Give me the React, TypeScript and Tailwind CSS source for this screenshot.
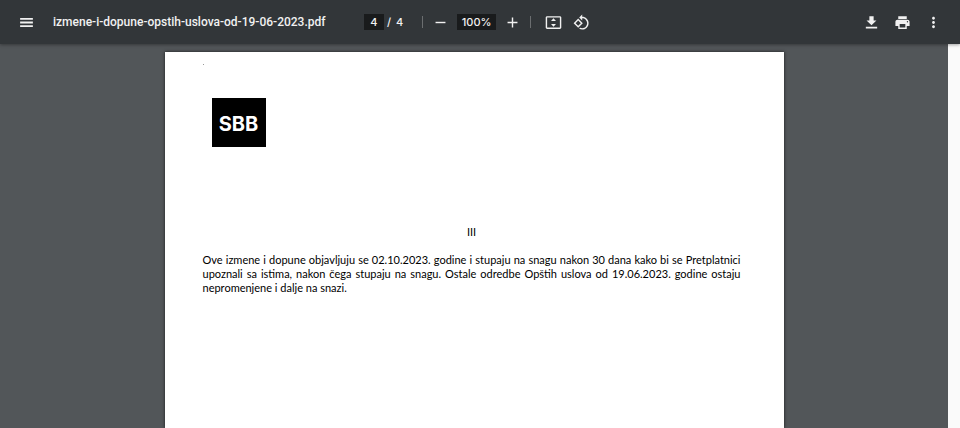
import type { ReactNode } from "react";

function Icon({ children }: { children: ReactNode }) {
  return (
    <svg viewBox="0 0 24 24" className="size-[17px]" fill="currentColor" aria-hidden="true">
      {children}
    </svg>
  );
}

function IconButton({ label, children }: { label: string; children: ReactNode }) {
  return (
    <button type="button" aria-label={label} className="flex size-[17px] shrink-0 items-center justify-center">
      <Icon>{children}</Icon>
    </button>
  );
}

function Divider() {
  return <span className="h-3 w-px shrink-0 bg-[#6b6e70]" />;
}

function Toolbar() {
  return (
    <header className="relative grid h-11 grid-cols-[1fr_auto_1fr] items-center bg-[#323639] font-['Inter',sans-serif] text-[11px] font-medium text-[#f1f1f1] shadow-[0_1px_3px_rgba(0,0,0,0.35)]">
      <div className="flex min-w-0 items-center gap-[18px] pl-[18px]">
        <IconButton label="Menu">
          <path d="M3 18.500h18v-2.500H3v2.500zm0-5.250h18v-2.500H3v2.500zm0-7.750v2.500h18V5.500H3z" />
        </IconButton>
        <h1 className="font-['Roboto',sans-serif] text-xs whitespace-nowrap">izmene-i-dopune-opstih-uslova-od-19-06-2023.pdf</h1>
      </div>
      <div className="flex items-center pr-1.5">
        <input aria-label="Page number" defaultValue="4" className="h-4 w-5 bg-[#191b1c] text-center" />
        <span className="w-3 pl-[3px]">/</span>
        <span className="mr-[19px]">4</span>
        <Divider />
        <div className="flex items-center gap-2 px-[9px]">
          <IconButton label="Zoom out">
            <path d="M5 11h14v2H5z" />
          </IconButton>
          <input aria-label="Zoom level" defaultValue="100%" className="h-4 w-[39px] bg-[#191b1c] text-center" />
          <IconButton label="Zoom in">
            <path d="M19 13h-6v6h-2v-6H5v-2h6V5h2v6h6v2z" />
          </IconButton>
        </div>
        <Divider />
        <div className="flex items-center gap-[11px] pl-[14px]">
          <IconButton label="Fit to page">
            <path d="M21 3H3c-1.1 0-2 .9-2 2v14c0 1.1.9 2 2 2h18c1.1 0 2-.9 2-2V5c0-1.1-.9-2-2-2zm0 16H3V5h18v14z" />
            <path d="M12 6l3.500 4h-7zM12 18l3.500-4h-7z" />
          </IconButton>
          <IconButton label="Rotate counterclockwise">
            <path d="M7.34 6.41L.86 12.9l6.49 6.48 6.49-6.48-6.5-6.49zM3.69 12.9l3.66-3.66L11 12.9l-3.66 3.66-3.65-3.66zm15.67-6.26C17.61 4.88 15.3 4 13 4V.76L8.76 5 13 9.24V6c1.79 0 3.58.68 4.95 2.05 2.73 2.73 2.73 7.17 0 9.9C16.58 19.32 14.79 20 13 20c-.97 0-1.94-.21-2.84-.61l-1.490 1.490C10.020 21.620 11.510 22 13 22c2.300 0 4.610-.88 6.360-2.640 3.520-3.510 3.520-9.210 0-12.720z" />
          </IconButton>
        </div>
      </div>
      <div className="flex items-center justify-end gap-[14px] pr-[18px]">
        <IconButton label="Download">
          <path d="M19 9h-4V3H9v6H5l7 7 7-7zM4 18v2.500h16V18H4z" />
        </IconButton>
        <IconButton label="Print">
          <path d="M19 8H5c-1.660 0-3 1.340-3 3v6h4v4h12v-4h4v-6c0-1.660-1.340-3-3-3zm-3 11H8v-5h8v5zm3-7c-.55 0-1-.45-1-1s.45-1 1-1 1 .45 1 1-.45 1-1 1zm-1-9H6v4h12V3z" />
        </IconButton>
        <IconButton label="More actions">
          <path d="M12 8c1.100 0 2-.9 2-2s-.9-2-2-2-2 .9-2 2 .9 2 2 2zm0 2c-1.100 0-2 .9-2 2s.9 2 2 2 2-.9 2-2-.9-2-2-2zm0 6c-1.100 0-2 .9-2 2s.9 2 2 2 2-.9 2-2-.9-2-2-2z" />
        </IconButton>
      </div>
    </header>
  );
}

export default function App() {
  return (
    <div className="flex h-screen flex-col overflow-hidden bg-[#525659]">
      <Toolbar />
      <div className="flex min-h-0 flex-1">
        <main className="flex min-w-0 flex-1 justify-center overflow-hidden pt-2">
          <article className="min-h-full w-[619px] shrink-0 bg-white pr-[43px] pl-[38px] font-['Lato','Noto_Sans',sans-serif] text-[11px] leading-[14px] text-black shadow-[0_0_3px_rgba(0,0,0,0.7)]">
            <div className="flex h-[46px] items-start pt-3">
              <span className="size-px bg-[#999999]" />
            </div>
            <div className="ml-[9px] flex h-[49px] w-[54px] items-center justify-center bg-black pt-0.5 font-['Inter',sans-serif] text-xl font-bold text-white">
              SBB
            </div>
            <h2 className="mt-[78px] text-center">III</h2>
            <p className="mt-[14px] text-justify">
              Ove izmene i dopune objavljuju se 02.10.2023. godine i stupaju na snagu nakon 30 dana kako bi se Pretplatnici
              upoznali sa istima, nakon čega stupaju na snagu. Ostale odredbe Opštih uslova od 19.06.2023. godine ostaju
              nepromenjene i dalje na snazi.
            </p>
          </article>
        </main>
        <div className="w-3 shrink-0 bg-[#fafafa]" />
      </div>
    </div>
  );
}
